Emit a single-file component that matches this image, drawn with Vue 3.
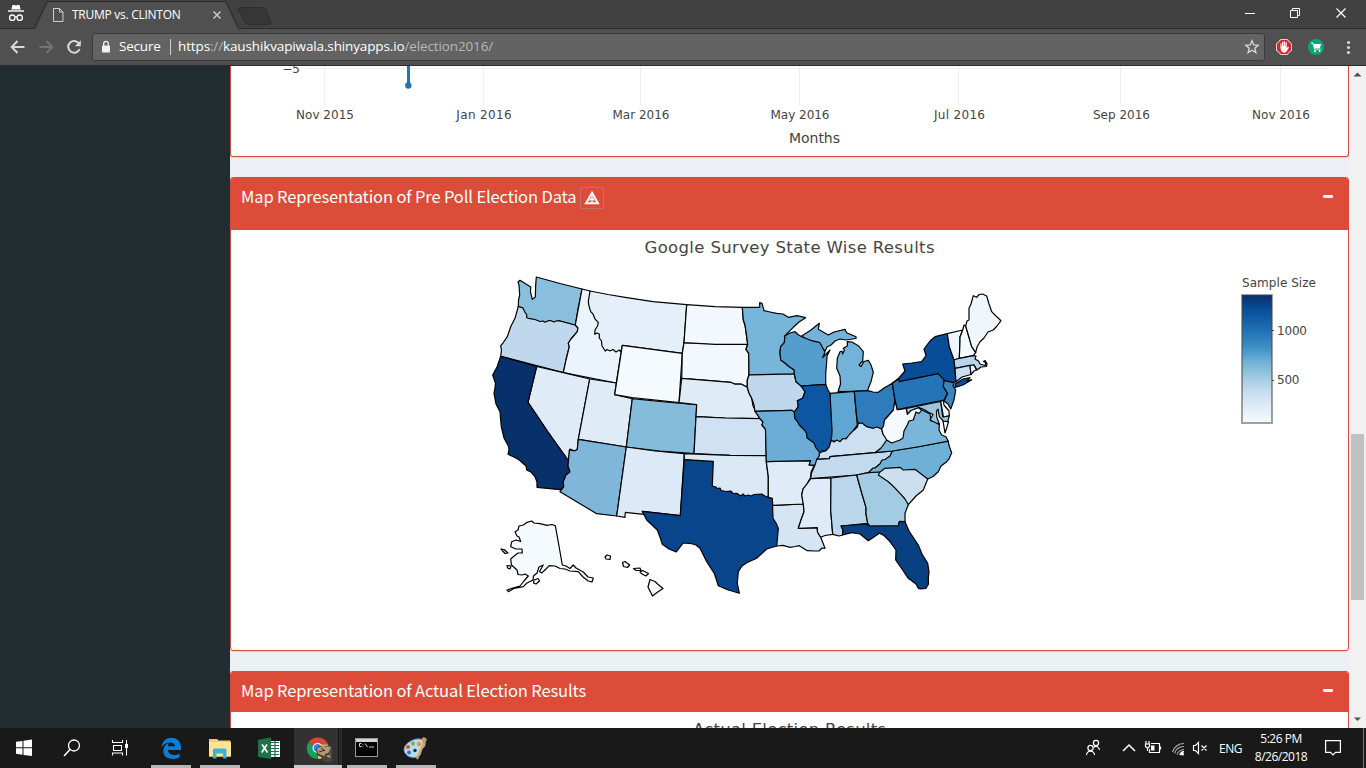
<script setup>
const states = [
  { id: 'OR', fill: '#c0d8ed', d: '518.3,306.3 516.5,313 515,318.3 511,326 507.3,336.7 503,343 500.7,345.7 501.5,350 500.7,356.3 563.3,372.7 566,360 569.3,346.7 568.3,343.3 571,339 577.3,331.7 578,328 575.3,325 540,315' },
  { id: 'WA', fill: '#89bfdd', d: '536.3,277 560,283.5 582,289 578,309 575.3,325 559,320.7 556,321 554,322 551,320.700 548.3,320.7 545,322.300 543,321 540,321.500 535,319.500 530,318.7 526.7,317.7 526.7,314.500 525,312.3 522.7,307.7 518.3,306.3 518.5,300 519.7,295 519,285 518,282 520,280.3 530.7,287 530.5,292 532.3,299.3 535.3,297 535.7,285' },
  { id: 'ID', fill: '#ebf3fb', d: '582,289 590,291 600,315 630,350 621,353 616.3,383 563.3,372.7 566,360 569.3,346.7 568.3,343.3 571,339 577.3,331.7 578,328 575.3,325' },
  { id: 'MT', fill: '#e5eff9', d: '590,291 608,294.5 626.7,297.7 653,301.7 686.7,304.7 684,342.7 682.3,353.3 622.3,345.3 621,352 619.3,350 616,352 613,349.500 610,351 607,349.5 605.3,351 602,346 601.500,341 599.3,338 599.3,334 597,333 594.7,334.3 595,330 597.500,326 598.3,322.3 595,319 593,314 590.7,311.7 589,306 588.3,301.7' },
  { id: 'NV', fill: '#dfebf7', d: '536.7,366.3 563.3,372.7 589.7,379 578.3,439.3 577.3,449.3 575,451 570,449 568.7,461 548,432 528,402.3' },
  { id: 'UT', fill: '#dfebf7', d: '589.7,379 616.3,383 614.7,394.7 632.3,398.7 626.3,447 578.3,439.3' },
  { id: 'WY', fill: '#f5faff', d: '622.3,345.3 682.3,353.3 679,402.7 632,397.5 614.7,394.7' },
  { id: 'CA', fill: '#08306b', d: '500.7,356.3 536.7,366.3 528,402.3 548,432 568.7,461 568,466 570,471.7 566,475 563.3,481.7 563.7,487 560,489.7 537,487.3 537,482 535,476.7 531,472 526.7,470 526,466 519.3,460 514,457 508,454.3 509,450 508.7,446.7 504,438 501.3,426.7 500.5,418 500,411.7 496,404 494,393.3 495,388 495.5,383.3 492.7,375 497,367' },
  { id: 'AZ', fill: '#7fb6da', d: '578.3,439.3 626.3,447 616.7,516 596.7,513.7 560,491.7 563.7,487 563.3,481.7 566,475 570,471.7 568,466 569.3,450 575,450.8 577.3,449.3' },
  { id: 'CO', fill: '#85bcdc', d: '632.3,398.7 665,402 696.7,404.7 694,453.7 660,451 626.3,447' },
  { id: 'NM', fill: '#dce9f6', d: '626.3,447 655,451 684.3,453.7 680.3,515.7 642.3,511.3 644,514.3 625.3,512.3 625,517.3 616.7,516' },
  { id: 'SD', fill: '#f3f8fe', d: '684,342.7 747.7,344.3 746,349.3 748.7,353.3 749,375 747.3,380 747.3,387.3 741,384 735,384.2 730.7,382.3 710,380.7 681.7,378.3 682.3,353.3' },
  { id: 'ND', fill: '#f3f8fe', d: '686.7,304.7 715,306.7 742.3,307.3 743.3,320 745,325 746,331.7 747.7,344.3 715,344.3 684,342.7' },
  { id: 'NE', fill: '#dfebf7', d: '681.7,378.3 710,380.7 730.7,382.3 735,384.2 741,384 747.3,387.3 749,393 751.7,398.3 753,406 760,418.7 725,418 696,416.7 696.7,404.7 679,402.7' },
  { id: 'KS', fill: '#cfe1f2', d: '696,416.7 725,418 760,418.7 763,422 762,425 765.5,429.3 766.3,455.7 730,455.3 694,453.7' },
  { id: 'OK', fill: '#dbe9f6', d: '684.3,453.7 730,455.3 766.3,455.7 766.3,461.7 768.3,476.7 768.3,499 740,500 705,490 705,462 684.3,459.7' },
  { id: 'LA', fill: '#d6e5f4', d: '772.7,505.3 803.3,504 804,511.7 801,520 798.3,528.3 817.3,527.7 817.5,532 820.7,537.3 823,543 825,548.3 822,548 819,551 815,551 807.3,550.7 799.3,545.7 795,546.5 790,547.3 783,545.3 776.7,546 760,535' },
  { id: 'TX', fill: '#08458b', d: '684.3,459.7 713.3,461.3 712.3,486 716,487 717,488.500 720,488 721,490.500 726,491.5 731,491.200 733,493.5 736.7,493.3 741,496 743,494 745,496 748.3,495 751,496 754,494.500 761.7,494 765,496 768.3,497.3 772.3,498.3 773,518.3 776,523 778.3,528.3 777.5,538 776.7,546 766.7,549 756.7,558.3 746.7,562.7 742,566 738.3,571.7 737.3,583.3 739.3,593.3 728.3,590 718.3,585.7 714.3,573.3 706.7,561.7 700,548.3 696,545 691.7,543.7 683.3,543 676.3,552 669,549 662.3,544.3 660,537 657.3,530 652,525 646.7,520 642.3,511.3 680.3,515.7' },
  { id: 'AR', fill: '#dfebf7', d: '766.3,461.7 790,461 811,460.7 809.3,465 814,466 811,472 810.7,477.3 807,484 803,489 801.7,495 803.3,504 772.7,505.3 772.3,498.3 768.3,497.3 768.3,476.7' },
  { id: 'MN', fill: '#77b5da', d: '742.3,307.3 759.7,307.3 759.7,302.7 762,303.3 764,310.7 770,312 776.7,313.3 783,314 788.3,317.3 797,315.7 805.7,317.7 799,322 793.3,327.3 785,335.7 784.3,342.7 780.7,346.7 780,352 780.7,360 785,363 788.3,366 794.3,370 794.3,374 749,375 748.7,353.3 746,349.3 747.7,344.3 746,331.7 745,325 743.3,320' },
  { id: 'IA', fill: '#c0d8ed', d: '749,375 794.3,374 796,381.7 801.7,386 805,391.7 802.7,398.3 797.3,400.7 798.3,406.7 794.3,412 791.7,410.3 755,411.3 754,405 751.7,398.3 749,393 747.3,387.3 747.3,380' },
  { id: 'MO', fill: '#6badd6', d: '755,411.3 791.7,410.3 794.3,412 810,430 820,452 819.3,456.7 815,465 809,465 810.7,460.7 766.3,461.7 765.5,429.3 762,425 763,422 760,418.7' },
  { id: 'MIU', fill: '#74b3d9', d: '801.7,336 811,330 819.3,323.3 818.3,329.3 828.3,335 834,332 845,329.3 846.7,332.7 856,336.7 856,338.5 846,340 840,339 835,341 831,345 827.3,346.7 825,351 823.3,349.3 820,344 811,343' },
  { id: 'WI', fill: '#549ecd', d: '785,335.7 790,333 795,331.7 798,334.5 801.7,336.7 811.7,340.7 820,342.7 823.3,349.3 825,352 822.7,357.7 830,350 827,356 826.7,361.7 825.7,373.3 825.7,384.3 801,386 796,381.7 794.3,374 794.3,370 788.3,366 785,363 780.7,360 780,352 780.7,346.7 784.3,342.7' },
  { id: 'MI', fill: '#74b3d9', d: '838,391.7 840.5,384 840,376 836.7,368.3 837.3,358.3 840,351.7 842,351 842.5,354 844.5,350 843.3,348.3 847.3,346 847.3,341.7 852,342 858.3,345.7 863.3,351.7 862.7,361 859,365 861,366.5 864,361.5 868.3,360.3 871,365 873.3,372.3 871,381.7 867.3,390.7 854.3,391.3' },
  { id: 'IN', fill: '#5fa6d2', d: '830,393.3 854.3,391.3 857.3,425 853.3,430.7 850,436 845,439 840,441.7 834,441 830,443.7' },
  { id: 'KY', fill: '#cde0f1', d: '819.3,456 819.3,452.7 826,450.7 829.3,446.7 830,442.7 832,440.5 834,442 837,440 840,441.7 843,438.5 846,439 849,435 853.3,430.7 857.3,427 858.3,423.3 866,420 881.7,429 883,434 890,443 875,452.7 830,456.7 829.3,458.7 816.7,459.3' },
  { id: 'IL', fill: '#0c56a2', d: '801,386 825.7,384.3 827.5,389 830,393.3 832,430 831.7,436.7 829.3,446.7 825.7,450.7 822,450.5 820,453 816,448 814,443 807,438 806.7,434 805.7,431.7 799.3,425 797,421 794.7,418.3 794.3,412 798.3,406.7 797.3,400.7 802.7,398.3 805,391.7' },
  { id: 'OH', fill: '#2f7cbc', d: '854.3,391.3 868.3,390.7 873,392 878.3,392.3 884,388 892.3,383.3 895,400 893.3,410 889,415 884.5,420 883.5,426 881.7,429 877,427 873.3,428.3 866.7,426.7 862,423 858.3,423.3 857,420' },
  { id: 'TN', fill: '#c3daee', d: '816.7,459.3 829.3,458.7 830,456.7 875,452.7 892.3,451 890,456.7 880,464.3 868.3,472.7 856.7,475 810.7,478.7 811.500,473 815,465' },
  { id: 'MS', fill: '#dfebf7', d: '810.7,478.7 831,478 830.7,510 832.7,534.3 825,535.5 820.7,537.3 817.5,532 817.3,527.7 798.3,528.3 801,520 804,511.7 803.3,504 801.7,495 803,489 807,484' },
  { id: 'AL', fill: '#b9d6ea', d: '831,478 856.7,475 862,494 866,507.3 866,514 867.7,523.3 841,526 843,530 842.7,535 839,536 832.7,534.3 830.7,510' },
  { id: 'GA', fill: '#a2cce3', d: '856.7,475 868.3,472.7 890,470 909,500 908.3,504.7 905,513.3 905,521.7 899.3,522 898.3,527.3 870,526 867.7,523.3 866,514 866,507.3 862,494' },
  { id: 'FL', fill: '#084082', d: '841,526 866.7,524 869.3,526 898.3,525.7 899.3,521.3 905,521.7 909,531 918.3,545 922,554 927.7,563.3 929,572 928.3,578.3 928.5,584 926,588.3 921,589 918.3,588.3 916,584 908.3,578.3 902,569 895.7,560 896,550 890,541.7 884,535.5 879.3,533.3 874,537 868.3,540.7 860,534 851.7,532.7 842.7,535 843,530' },
  { id: 'NC', fill: '#6fb0d7', d: '868.3,472.7 873,468 875,468 880,463.8 882,460 885,459.500 890,456 892.3,451 920,446.5 948,441 949.500,447 951.7,452.7 949,459 946.7,461.7 941,466 938.3,471.7 932.7,476.7 927.7,479 915,475 880,472' },
  { id: 'SC', fill: '#ccdff1', d: '880,472 885,468.3 900,467.3 903.3,470 915,469.3 927.7,479 923.3,490 916,496 908.3,504.7 905,499 900,493.3 893,486 888.3,481.7 878.3,475' },
  { id: 'VA', fill: '#79b6d9', d: '875,452.7 881,448 886.7,440 891.7,430 910,410 920,409 930,414 931,421 936,421 939.3,425 939,430 941.7,435 946,436.7 948.3,441.200 920,446.5 892.3,451' },
  { id: 'VAE', fill: '#f7fbff', d: '943,421 948.5,421.5 947,427 945,433 944,427' },
  { id: 'MD', fill: '#9ac7e0', d: '906.3,408.5 940.7,401.5 942.7,416.7 949.3,415.7 947.7,421.7 943.3,421 939.3,416.7 938,409 936.5,411 936.7,417 939.5,424.5 930,420 933,414.5 928,412 924,409.5 919,407.5 915,409 907.3,414.3' },
  { id: 'DE', fill: '#f0f6fd', d: '940.7,401.5 943.3,400 944,405 949,411 949.3,415.7 943.5,417' },
  { id: 'WV', fill: '#f4f9fe', d: '893.3,410 895,400 897.3,409.7 906.3,408.5 907.3,414.3 911,410.5 915,409 918.3,407.7 921.7,410 919,413.5 916,412 913.3,420 909,421 907.3,425 904,431 903,438 900,440 891.7,443 886.7,440 883,434 881.7,429 883.5,426 884.5,420 889,415' },
  { id: 'NY', fill: '#084d97', d: '892.3,383.3 899,378 905,371 902.7,364 912,363 921.7,361.7 926,355.7 924,349 930,341 935,336.7 947.3,333.7 949.3,346.7 954,360 956,382 944,383 899,386' },
  { id: 'LI', fill: '#084d97', d: '955,384 963,379 970,377.7 967,381 971.7,379.7 963,385 955,387.3' },
  { id: 'PA', fill: '#2474b7', d: '892.3,383.3 899,378.5 899,381.7 938.3,373.7 944,380 943.3,386.7 947.7,393.3 944,400 897.3,409.7 895,400' },
  { id: 'NJ', fill: '#3a87c0', d: '944,380.7 954,382.7 953,386 955.7,390 954,400 950.7,409 948,404 944,401 947.7,393.3 943.3,386.7' },
  { id: 'VT', fill: '#f0f6fd', d: '947.3,333.7 962.7,330 960,337 960,341.7 959.3,358.3 954,360 949.3,346.7' },
  { id: 'NH', fill: '#f5faff', d: '962.7,330 964,325 965.7,326 971.7,346.7 975.7,352.7 973.3,355.7 959.3,358.3 960,341.7 960,337' },
  { id: 'ME', fill: '#f0f6fd', d: '965.7,326 967,321 969,320 969,308.3 971,304 973.3,295.7 976.7,297.3 979,294.5 982.7,294 986.7,296 989,304 991.7,311.7 995,315 1001,320.7 997,326 993.3,330 988,332 984,338 980,341.7 977,347 975.7,352.7 971.7,346.7' },
  { id: 'MA', fill: '#b9d5ea', d: '954,360 959.3,358.3 973.3,355.7 976,356 975,359 978.500,361 980,364 985,365.500 986,363 983.500,361.500 985,360.500 987,363.500 986.500,366.500 981,367 977,370 974,365 955,368.3' },
  { id: 'CT', fill: '#ccdff1', d: '955,368.3 970,365.3 971,374.5 962,377 956,381.7' },
  { id: 'RI', fill: '#f0f6fd', d: '970,365.3 974,365 976.5,370 974,371 971,374.5' },
  { id: 'AK', fill: '#f5faff', d: '531.7,521 534,523 540,523.7 547,525.3 552,524.5 555.3,525.7 559,546 562.3,565 566,566 570,568.5 573.3,565 576,568 583.3,572 588,577 593.3,578 592,582 588.3,581 583,577 578.3,571.7 570,571 565,569 560,568.5 555,566 549.3,565.7 546,569 541.7,573 539.5,571.5 543.3,565 539,567 537,573 533.5,576 533,580 527,583 523.3,586.7 514,588.5 508.3,591.7 507,590 513,588 520,586 524,581 528.3,576 525,574 522,575 518,574.5 517,570 511.5,565 510.7,559 513.3,556.7 518,553 522.3,553 522,549 516,549 510.7,546.7 511.7,541.7 516,540 520.7,541.5 519,537 517,536 515,531.7 518,530 519,526 523.3,525 527,522.3' },
  { id: 'AK2', fill: '#f5faff', d: '501,549 504,549.5 508,553 505,553.5' },
  { id: 'AK3', fill: '#f5faff', d: '507,565.5 511,566 510,569 507.5,568' },
  { id: 'AK4', fill: '#f5faff', d: '534,580 538,578.5 539.5,581 536,584 533.5,583' },
  { id: 'HI1', fill: '#f5faff', d: '605,557 607,555 610.5,556 610,559.5 606,559' },
  { id: 'HI2', fill: '#f5faff', d: '622.5,562.5 625,561.5 629.7,565 627.5,567.5 623.5,566.5' },
  { id: 'HI3', fill: '#f5faff', d: '633.5,568.5 640,568 641,570.5 636,570.5' },
  { id: 'HI4', fill: '#f5faff', d: '640,572 642.5,570.5 648.5,573.5 646,576 642,574' },
  { id: 'HI5', fill: '#f5faff', d: '650,579.5 655,581.5 657,583.5 663,588.5 657,592.5 652.5,596 650.5,592 648,587' },
]

const months = [
  { x: 325, w: 58, label: 'Nov 2015' },
  { x: 484, w: 55.5, label: 'Jan 2016' },
  { x: 641, w: 57, label: 'Mar 2016' },
  { x: 800, w: 59, label: 'May 2016' },
  { x: 959.5, w: 51, label: 'Jul 2016' },
  { x: 1121.5, w: 57, label: 'Sep 2016' },
  { x: 1281, w: 58, label: 'Nov 2016' },
]
</script>

<template>
  <div class="screen">
    <header class="tabs">
      <svg width="1366" height="30" viewBox="0 0 1366 30">
        <path d="M0 28.5H34L47 1.5H226L239 28.5H1366" fill="none" stroke="#2b2b2b" />
        <path d="M35 30L48 2H225L238 30Z" fill="#505050" />
        <path d="M240 7.5H262Q265 7.5 266 10L271 22Q271 24.500 269 24.500H249Q246 24.500 245 22L238 9Z" fill="#363636" stroke="#2e2e2e" />
        <g fill="#fff">
          <path d="M12.500 5H15L16 5.700L17 5H19.500L20.700 9.500H11.300Z" />
          <rect x="8" y="10.300" width="16" height="1.400" />
        </g>
        <g fill="none" stroke="#fff" stroke-width="1.300">
          <circle cx="12.300" cy="17.700" r="2.700" /><circle cx="19.700" cy="17.700" r="2.700" /><path d="M15 17.300Q16 16.500 17 17.300" />
        </g>
        <path d="M53.500 8.500H59.500L63 12V21.500H53.500ZM59.500 8.500V12H63" fill="none" stroke="#d0d0d0" />
        <path d="M213.500 11.500L220.500 18.500M220.500 11.500L213.500 18.500" stroke="#c8c8c8" stroke-width="1.500" />
        <g fill="none" stroke="#fff">
          <path d="M1245 13.500H1255" />
          <path d="M1290.500 10.500H1297.500V17.500H1290.500ZM1292.500 10.500V8.500H1299.500V15.500H1297.500" />
          <path d="M1336.500 8.500L1345.500 17.500M1345.500 8.500L1336.500 17.500" stroke-width="1.200" />
        </g>
      </svg>
      <span class="tab-title">TRUMP vs. CLINTON</span>
    </header>

    <nav class="toolbar">
      <svg class="nav-icons" width="92" height="36" viewBox="0 29 92 36">
        <path d="M24.500 47H12M17.500 41L11.700 47L17.500 53" fill="none" stroke="#d8d8d8" stroke-width="2" />
        <path d="M39.500 47H52M46.500 41L52.300 47L46.500 53" fill="none" stroke="#747474" stroke-width="2" />
        <path d="M79 43.500A5.900 5.900 0 1 0 79.600 49" fill="none" stroke="#d8d8d8" stroke-width="2" />
        <path d="M80.800 40.300V46.300H74.800Z" fill="#d8d8d8" />
      </svg>
      <div class="address">
        <svg width="10" height="14" viewBox="0 0 10 14"><rect x="1" y="5.500" width="8" height="7" rx=".6" fill="#f2f2f2" /><path d="M2.700 6V3.700a2.300 2.300 0 0 1 4.600 0V6" fill="none" stroke="#f2f2f2" stroke-width="1.300" /></svg>
        <span class="secure">Secure</span>
        <i class="divider"></i>
        <span class="url">https<em>://</em>kaushikvapiwala.shinyapps.io<em>/election2016/</em></span>
        <svg class="star" width="16" height="16" viewBox="0 0 16 16"><path d="M8 1.800L9.700 6L14.200 6.300L10.800 9.200L11.900 13.600L8 11.200L4.100 13.600L5.200 9.200L1.800 6.300L6.300 6Z" fill="none" stroke="#d8d8d8" stroke-width="1.300" /></svg>
      </div>
      <svg class="extensions" width="96" height="36" viewBox="1270 29 96 36">
        <path d="M1280.700 39H1287.300L1292 43.700V50.300L1287.300 55H1280.700L1276 50.300V43.700Z" fill="#ded2d2" />
        <path d="M1281 40H1287L1291 44V50L1287 54H1281L1277 50V44Z" fill="#d7262b" />
        <path d="M1280.500 48V43.500H1281.600V46.500H1282.100V41.800H1283.300V46H1283.800V41.200H1285V46H1285.500V42.200H1286.700V48L1288 46.700L1289 47.500L1286.500 51.500Q1285.500 53 1283.500 52.500Q1281 52 1280.500 48Z" fill="#fff" />
        <circle cx="1316" cy="47" r="8" fill="#0fa37a" />
        <path d="M1311 43H1313L1314.500 49H1320.500" fill="none" stroke="#fff" />
        <path d="M1313.500 44H1321L1320 48H1314.500Z" fill="#fff" />
        <circle cx="1315" cy="51" r="1" fill="#fff" /><circle cx="1319.500" cy="51" r="1" fill="#fff" />
        <g fill="#d8d8d8"><circle cx="1348.500" cy="42.500" r="1.600" /><circle cx="1348.500" cy="47.500" r="1.600" /><circle cx="1348.500" cy="52.500" r="1.600" /></g>
      </svg>
    </nav>

    <main class="page">
      <aside class="sidebar"></aside>
      <section class="content">
        <article class="box trend">
          <svg class="plot" width="1117" height="90" viewBox="231 66 1117 90">
            <path d="M306 68.500H1328" stroke="#eee" />
            <path v-for="m in months" :key="m.label" :d="`M${Math.floor(m.x) - .5} 66V105`" stroke="#eee" />
            <path d="M408.500 66V85" stroke="#1f77b4" stroke-width="3" />
            <circle cx="408.300" cy="85.500" r="3.200" fill="#1f77b4" />
            <text x="300" y="73" text-anchor="end" font-size="12">−5</text>
            <text v-for="m in months" :key="m.label + 't'" :x="m.x - m.w / 2" y="119" font-size="12" :textLength="m.w">{{ m.label }}</text>
            <text x="789" y="143" font-size="14" textLength="51">Months</text>
          </svg>
        </article>

        <article class="box map">
          <header class="box-header">
            <h3>Map Representation of Pre Poll Election Data</h3>
            <span class="warn">
              <svg width="16" height="14" viewBox="0 0 16 14"><path d="M8 1.800L14 12.200H2Z" fill="none" stroke="#fff" stroke-width="2" /><path d="M8 3V12M5.500 9.500L8 7L10.500 9.500" fill="none" stroke="#fff" stroke-width="1.300" /></svg>
            </span>
            <i class="collapse"></i>
          </header>
          <svg class="plot" width="1117" height="420" viewBox="231 230 1117 420">
            <defs>
              <linearGradient id="blues" x1="0" y1="0" x2="0" y2="1">
                <stop offset="0" stop-color="#08306b" /><stop offset=".125" stop-color="#08519c" /><stop offset=".28" stop-color="#2171b5" />
                <stop offset=".42" stop-color="#4292c6" /><stop offset=".51" stop-color="#6baed6" /><stop offset=".64" stop-color="#9ecae1" />
                <stop offset=".75" stop-color="#c6dbef" /><stop offset=".87" stop-color="#deebf7" /><stop offset="1" stop-color="#f7fbff" />
              </linearGradient>
            </defs>
            <text x="644.500" y="253" font-size="16.500" textLength="290">Google Survey State Wise Results</text>
            <polygon v-for="s in states" :key="s.id" :points="s.d" :fill="s.fill" class="state" />
            <text x="1242" y="287" font-size="12" textLength="74">Sample Size</text>
            <rect x="1242" y="295" width="30" height="128" fill="url(#blues)" stroke="#444" stroke-opacity=".5" stroke-width="2" />
            <path d="M1272 330.500H1274M1272 380.500H1274" stroke="#444" />
            <text x="1277" y="335" font-size="12" textLength="30">1000</text>
            <text x="1277" y="384" font-size="12" textLength="22.500">500</text>
          </svg>
        </article>

        <article class="box actual">
          <header class="box-header short">
            <h3>Map Representation of Actual Election Results</h3>
            <i class="collapse"></i>
          </header>
          <svg class="plot" width="1117" height="60" viewBox="231 712 1117 60">
            <text x="693" y="735" font-size="16.500" textLength="193">Actual Election Results</text>
          </svg>
        </article>
      </section>
      <div class="scrollbar">
        <svg width="17" height="17" viewBox="0 0 17 17"><path d="M4.500 10.500L8.500 6.500L12.500 10.500Z" fill="#505050" /></svg>
        <i class="thumb"></i>
        <svg class="down" width="17" height="17" viewBox="0 0 17 17"><path d="M5 6.500L8.500 10L12 6.500Z" fill="#505050" /></svg>
      </div>
    </main>

    <footer class="taskbar">
      <svg width="440" height="40" viewBox="0 728 440 40">
        <path d="M16 741.800L22.500 740.900V747.300H16ZM23.500 740.700L32 739.500V747.300H23.500ZM16 748.300H22.500V754.700L16 753.800ZM23.500 748.300H32V756L23.500 754.900Z" fill="#fff" />
        <circle cx="74" cy="745.500" r="5.500" fill="none" stroke="#fff" stroke-width="1.300" /><path d="M70 749.500L64 756" stroke="#fff" stroke-width="1.500" />
        <path d="M112.500 740V742.500H122.500V740M112.500 755.500V753H122.500V755.500M113.500 745.500H121.500V750.500H113.500ZM126.500 740V755.500" fill="none" stroke="#fff" stroke-width="1.100" />
        <rect x="125" y="744" width="3" height="4" fill="#fff" />
        <path d="M161.500 747C162.500 740.500 166.500 737.700 171.500 737.700C178 737.700 181 742.500 181 747.500V750H168C168.500 756 176 756 179.500 753.500V757.500C173 760.500 162 759 163.500 749.500C164 746 166.500 743.800 169 743C168 744.500 168 745.500 168 746.200H175C175 741.500 166 741 161.500 747Z" fill="#0c7cd5" />
        <path d="M209 739H217L218.500 740.500H230.500V756.500H209Z" fill="#f4cf6c" /><rect x="209" y="742" width="22" height="14.500" fill="#fde597" />
        <path d="M213 758.500V750Q213 748.500 214.500 748.500H225Q226.500 748.500 226.500 750V758.500H223V753.500H216.500V758.500Z" fill="#3fb0d6" />
        <path d="M269 741H280V757H269Z" fill="#fff" /><path d="M258 740L271 737.300V759L258 757Z" fill="#1e7245" />
        <path d="M271 742.500H279M271 745.500H279M271 748.500H279M271 751.500H279M271 754.500H279M275 741V757" stroke="#1e7245" stroke-width="1.200" />
        <path d="M262 744.500L267.500 752.500M267 744.500L261.700 752.500" stroke="#fff" stroke-width="1.700" />
        <rect x="294" y="728" width="44" height="40" fill="#323232" /><rect x="338" y="728" width="1" height="40" fill="#151515" /><rect x="339" y="728" width="3" height="40" fill="#292929" />
        <path d="M317.500 748L308.500 742.500A11 11 0 0 1 328 744.500H317.500Z" fill="#df4334" />
        <path d="M308.300 742.500A11 11 0 0 0 317 759L321 750L317.500 748Z" fill="#17a05e" />
        <path d="M319 744.500H328A11 11 0 0 1 318 759Z" fill="#f9ce44" />
        <circle cx="317.500" cy="748" r="5" fill="#fff" /><circle cx="317.500" cy="748" r="3.900" fill="#4284f4" />
        <path d="M316 748L319 746L331 745.500L332 750V761.500L325 762L321 757L317 755Z" fill="#4a4340" />
        <path d="M317 748L323 746L331 747L329 752L324 756L318 753.500ZM326 756L331 753L330 758Z" fill="#b29a79" />
        <path d="M321 748L325 751M325 754L331 755M319 752L325 750" stroke="#302c2d" />
        <rect x="355.500" y="738.500" width="22" height="18" fill="#050505" stroke="#999" /><rect x="356" y="739" width="21" height="3" fill="#d5d5d5" />
        <path d="M361.500 743.500H359.500V746.500H361.500M363 744V744.600M363 746V746.600M365 743.500L367.500 747M369 747H374" fill="none" stroke="#d0d0d0" />
        <path d="M411 741C418 737 426 739 425 745C424 749 420 748 421 752C421 757 414 759 408 756C402 752 403 745 411 741Z" fill="#b9dceb" stroke="#7da4ba" />
        <circle cx="413" cy="743.500" r="2" fill="#6cba4d" /><circle cx="408" cy="747" r="2" fill="#dd4b32" /><circle cx="419" cy="744" r="2.200" fill="#ed913b" /><circle cx="409" cy="752.500" r="2" fill="#3571d0" /><circle cx="415" cy="750.500" r="1.700" fill="#1d2a33" />
        <path d="M424.500 742L417 759" stroke="#d9a25a" stroke-width="2.200" /><path d="M422 738L424 737L427 739L425 744L422.500 743Z" fill="#c89868" />
        <path d="M151 766.500H191M200 766.500H240M347 766.500H387M396 766.500H436" stroke="#b5b5b5" stroke-width="3" /><path d="M294 766.500H342" stroke="#c8c8c8" stroke-width="3" />
      </svg>
      <div class="tray">
        <svg width="130" height="40" viewBox="1080 728 130 40">
          <g fill="none" stroke="#fff" stroke-width="1.200">
            <circle cx="1090.500" cy="748" r="2.600" /><path d="M1086.500 755C1087 750 1094 750 1094.500 755" /><circle cx="1096" cy="743" r="2.600" /><path d="M1093.500 747.500C1096 745.500 1099 746.500 1099.500 750" />
            <path d="M1123 751L1129 745L1135 751" stroke-width="1.500" />
            <path d="M1151 743.500H1159.500V752.500H1149.500V749M1160.500 746.500V749.500M1146 741V743.500M1149 741V743.500M1145.500 744H1149.500V746.500L1147.500 748.500L1145.500 746.500ZM1147.500 748V751" />
            <path d="M1172.500 752A12 12 0 0 1 1184 743.500M1174.500 753.500A10 10 0 0 1 1184 746.500M1177 754.500A8 8 0 0 1 1184 749.500" stroke="#aaa" />
            <path d="M1180 755A5 5 0 0 1 1184 751.500" stroke-width="1.500" />
            <path d="M1193.500 745.500H1195.500L1198.500 742.500V753.500L1195.500 750.500H1193.500ZM1201.500 745.500L1206.500 750.500M1206.500 745.500L1201.500 750.500" />
          </g>
          <rect x="1151" y="745.500" width="3.500" height="5" fill="#fff" /><circle cx="1182.500" cy="754" r="1.500" fill="#fff" />
        </svg>
        <span class="lang">ENG</span>
        <div class="clock"><span>5:26 PM</span><span>8/26/2018</span></div>
        <svg class="notes" width="17" height="16" viewBox="0 0 17 16"><path d="M.6 .6H15.400V12.400H10.500L8 15L5.500 12.400H.6Z" fill="none" stroke="#fff" stroke-width="1.200" /></svg>
        <i class="desk"></i>
      </div>
    </footer>
  </div>
</template>

<style>
body { overflow: hidden; }
</style>

<style scoped>
.screen { width: 1366px; height: 768px; overflow: hidden; display: flex; flex-direction: column; font-family: "Open Sans", "Noto Sans", sans-serif; }
svg { display: block; flex: none; }
.tabs { height: 29px; background: #414141; position: relative; }
.tab-title { position: absolute; left: 72px; top: 6px; font-size: 12px; line-height: 17px; color: #fff; letter-spacing: -.27px; white-space: nowrap; }
.toolbar { height: 36px; background: #505050; border-bottom: 1px solid #2a2a2a; display: flex; align-items: center; flex: none; }
.address { width: 1171px; height: 26px; box-sizing: content-box; border: 1px solid #3b3b3b; border-radius: 3px; background: #636363; display: flex; align-items: center; color: #fff; font-size: 13.500px; }
.address span { position: relative; top: -1px; }
.address > svg:first-child { margin-left: 8px; }
.secure { margin-left: 8px; width: 42px; letter-spacing: -.2px; }
.divider { width: 1px; height: 16px; background: #d0d0d0; margin: 0 7px 0 9px; }
.url { letter-spacing: -.13px; white-space: nowrap; }
.url em { font-style: normal; color: #b8b8b8; }
.star { margin-left: auto; margin-right: 4px; }
.extensions { margin-left: 5px; }
.page { height: 662px; display: flex; overflow: hidden; flex: none; }
.sidebar { width: 230px; background: #222d32; }
.content { width: 1119px; background: #ecf0f5; display: flex; flex-direction: column; gap: 20px; }
.box { box-sizing: border-box; border: 1px solid #d64c3c; border-radius: 3px; background: #fff; box-shadow: 0 1px 1px rgba(0, 0, 0, .1); flex: none; overflow: hidden; }
.trend { height: 91px; border-top: 0; border-radius: 0 0 3px 3px; }
.map { height: 474px; }
.actual { height: 200px; }
.box-header { height: 52px; box-sizing: border-box; background: #dd4b39; display: flex; align-items: flex-start; padding: 8px 15px 0 10px; }
.box-header.short { height: 40px; }
h3 { margin: 0; font: 400 16.500px/20px "Noto Sans CJK SC", sans-serif; letter-spacing: -.135px; color: #fff; white-space: nowrap; }
.warn { width: 22px; height: 20px; border: 1px solid #bd7467; border-radius: 2px; margin: 1px 0 0 4px; display: flex; align-items: center; justify-content: center; }
.collapse { width: 10px; height: 3px; border-radius: 1px; background: #fff; margin: 9px 0 0 auto; }
.plot { font-family: "DejaVu Sans", Verdana, sans-serif; fill: #444; }
.state { stroke: #000; stroke-width: 1.200; stroke-linejoin: round; }
.scrollbar { width: 17px; background: #f1f1f1; display: flex; flex-direction: column; }
.thumb { width: 13px; height: 166px; background: #c1c1c1; margin: 351px 0 0 2px; }
.down { margin-top: auto; }
.taskbar { height: 40px; background: #191919; display: flex; justify-content: space-between; color: #fff; }
.tray { display: flex; align-items: center; width: 286px; font-size: 12px; }
.lang { width: 30px; margin-left: 9px; letter-spacing: -.5px; }
.clock { width: 64px; display: flex; flex-direction: column; align-items: center; line-height: 18px; letter-spacing: -.5px; white-space: nowrap; }
.notes { margin-left: 12px; }
.desk { width: 1px; height: 40px; background: #777; margin-left: 21px; }
</style>
